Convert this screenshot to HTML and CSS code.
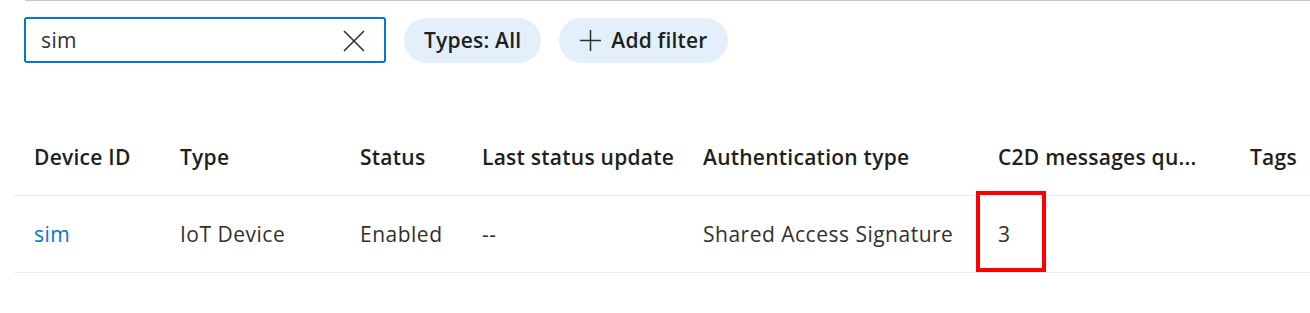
FILE: index.html
```html
<!DOCTYPE html>
<html lang="en">
<head>
<meta charset="utf-8">
<title>Devices</title>
<link rel="stylesheet" href="styles.css">
</head>
<body>
<div class="topline"></div>
<div class="toolbar">
  <div class="search">
    <span class="search-text">sim</span>
    <svg class="clear" width="24" height="24" viewBox="0 0 24 24"><path d="M2 2 L22 22 M22 2 L2 22" stroke="#323130" stroke-width="1.6" fill="none"/></svg>
  </div>
  <button class="pill">Types: All</button>
  <button class="pill add"><svg class="plus" width="24" height="24" viewBox="0 0 24 24"><path d="M12 1 V23 M1 12 H23" stroke="#323130" stroke-width="1.6" fill="none"/></svg>Add filter</button>
</div>
<div class="table">
  <div class="row head">
    <div class="cell c1">Device ID</div>
    <div class="cell c2">Type</div>
    <div class="cell c3">Status</div>
    <div class="cell c4">Last status update</div>
    <div class="cell c5">Authentication type</div>
    <div class="cell c6" title="C2D messages queued">C2D messages qu...</div>
    <div class="cell c7">Tags</div>
  </div>
  <div class="row">
    <div class="cell c1"><a class="link" href="#">sim</a></div>
    <div class="cell c2">IoT Device</div>
    <div class="cell c3">Enabled</div>
    <div class="cell c4">--</div>
    <div class="cell c5">Shared Access Signature</div>
    <div class="cell c6 marked">3<span class="highlight"></span></div>
    <div class="cell c7"></div>
  </div>
</div>
</body>
</html>
```
FILE: styles.css
```css
html, body {
  margin: 0;
  padding: 0;
  background: #ffffff;
}
body {
  width: 1310px;
  height: 313px;
  overflow: hidden;
  font-family: "Open Sans", "Noto Sans", sans-serif;
  color: #323130;
}
.topline {
  margin-left: 25px;
  height: 1px;
  background: #c8c8c8;
}
.toolbar {
  display: flex;
  align-items: center;
  padding-left: 24px;
  margin-top: 16px;
  gap: 18px;
}
.search {
  box-sizing: border-box;
  width: 362px;
  height: 46px;
  border: 2px solid #0078d4;
  border-radius: 3px;
  display: flex;
  align-items: center;
  justify-content: space-between;
  padding: 0 18px 0 15px;
}
.search-text {
  font-size: 21px;
  letter-spacing: 0.4px;
  color: #323130;
}
.clear {
  width: 24px;
  height: 24px;
  margin-top: 1px;
}
.pill {
  box-sizing: border-box;
  height: 45px;
  border: none;
  border-radius: 23px;
  background: #e3f0fb;
  font-family: inherit;
  font-size: 21px;
  font-weight: 600;
  letter-spacing: 0.2px;
  color: #201f1e;
  padding: 0 20px 0 20px;
  display: flex;
  align-items: center;
}
.plus {
  width: 23px;
  height: 23px;
  margin-right: 9px;
}
.table {
  margin-top: 56px;
  margin-left: 14px;
}
.row {
  display: flex;
  height: 76px;
  align-items: center;
  border-bottom: 1px solid #edebe9;
}
.cell {
  box-sizing: border-box;
  padding-left: 20px;
  font-size: 21px;
  letter-spacing: 0.5px;
  white-space: nowrap;
  height: 100%;
  display: flex;
  align-items: center;
}
.head .cell {
  font-weight: 600;
  letter-spacing: 0.25px;
  color: #201f1e;
}
.c1 { width: 146px; }
.c2 { width: 180px; }
.c3 { width: 122px; }
.c4 { width: 221px; }
.c5 { width: 295px; }
.c6 { width: 252px; }
.c7 { flex: 1; }
.link {
  color: #0078d4;
  text-decoration: none;
}
.marked {
  position: relative;
}
.highlight {
  position: absolute;
  left: -2px;
  top: -5px;
  width: 70px;
  height: 81px;
  box-sizing: border-box;
  border: 4px solid #ff0000;
}
```
